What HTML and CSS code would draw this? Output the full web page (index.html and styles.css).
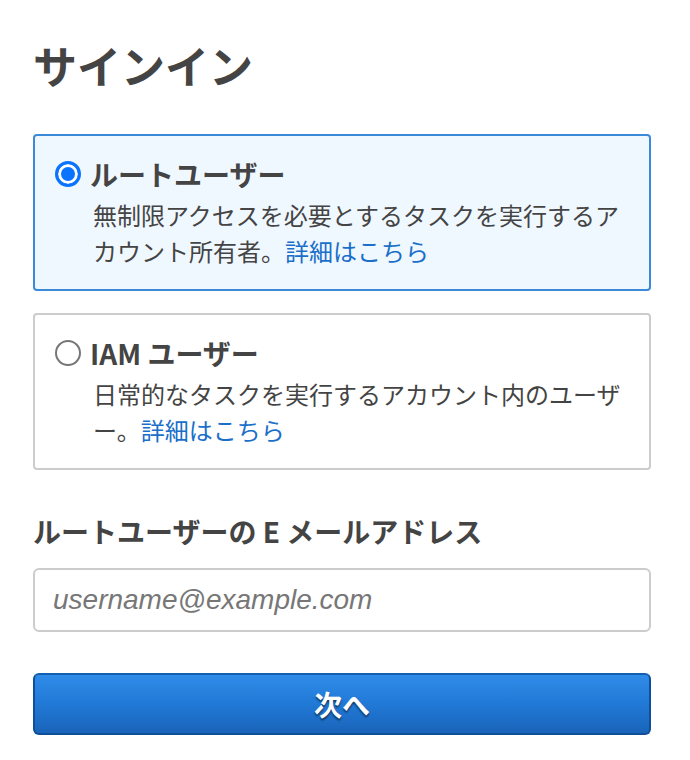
FILE: index.html
```html
<!DOCTYPE html>
<html lang="ja">
<head>
<meta charset="utf-8">
<title>サインイン</title>
<link rel="stylesheet" href="styles.css">
</head>
<body>
<main class="page">
  <h1 class="title">サインイン</h1>
  <div class="option selected">
    <div class="option-head">
      <span class="radio on"></span>
      <span class="option-title">ルートユーザー</span>
    </div>
    <p class="option-desc"><span>無制限アクセスを必要とするタスクを実行するア</span><br><span>カウント所有者。</span><a class="link" href="#">詳細はこちら</a></p>
  </div>
  <div class="option">
    <div class="option-head">
      <span class="radio"></span>
      <span class="option-title">IAM ユーザー</span>
    </div>
    <p class="option-desc"><span>日常的なタスクを実行するアカウント内のユーザ</span><br><span>ー。</span><a class="link" href="#">詳細はこちら</a></p>
  </div>
  <label class="field-label" for="email">ルートユーザーの E メールアドレス</label>
  <input class="field-input" id="email" type="text" placeholder="username@example.com">
  <button class="btn-next" type="button">次へ</button>
</main>
</body>
</html>
```
FILE: styles.css
```css
html, body {
  margin: 0;
  padding: 0;
  background: #ffffff;
}
body {
  font-family: "Noto Sans CJK JP", "Noto Sans", sans-serif;
  color: #444444;
}
.page {
  width: 618px;
  padding: 40px 0 0 33px;
  display: flex;
  flex-direction: column;
}
.title {
  margin: 0 0 44px;
  font-size: 44px;
  line-height: 50px;
  font-weight: 700;
  color: #444444;
}
.option {
  border: 2px solid #cccccc;
  border-radius: 4px;
  padding: 18px 20px 20px 20px;
  background: #ffffff;
  margin-bottom: 22px;
}
.option.selected {
  border-color: #3a8ad9;
  background: #f0f8ff;
}
.option-head {
  display: flex;
  align-items: center;
  gap: 9px;
  height: 40px;
}
.radio {
  box-sizing: border-box;
  width: 26px;
  height: 26px;
  border-radius: 50%;
  border: 2px solid #767676;
  background: #ffffff;
  flex: none;
}
.radio.on {
  border: 3px solid #0a74ff;
  background: #0a74ff;
  box-shadow: inset 0 0 0 3px #ffffff;
}
.option-title {
  font-size: 28px;
  line-height: 40px;
  font-weight: 700;
  color: #444444;
}
.option-desc {
  margin: 3px 0 0 38px;
  font-size: 24px;
  line-height: 36px;
  color: #444444;
  white-space: nowrap;
}
.link {
  color: #1a6fc9;
  text-decoration: none;
}
.field-label {
  margin-top: 19px;
  font-size: 28px;
  line-height: 40px;
  font-weight: 700;
  color: #444444;
}
.field-input {
  box-sizing: border-box;
  margin-top: 17px;
  height: 64px;
  width: 618px;
  border: 2px solid #cccccc;
  border-radius: 6px;
  padding: 0 18px;
  font-family: "Liberation Sans", Arial, sans-serif;
  font-size: 28px;
  color: #444444;
  background: #ffffff;
  outline: none;
}
.field-input::placeholder {
  font-style: italic;
  color: #777777;
}
.btn-next {
  box-sizing: border-box;
  margin-top: 41px;
  height: 62px;
  width: 618px;
  border: 2px solid #0e4f99;
  border-top-color: #1460b0;
  border-radius: 6px;
  background: linear-gradient(to bottom, #2f8ce8 0%, #2179d6 50%, #1a64ba 100%);
  color: #ffffff;
  font-family: "Noto Sans CJK JP", sans-serif;
  font-size: 28px;
  font-weight: 700;
  text-shadow: 0 2px 2px rgba(0, 0, 0, 0.55);
  cursor: pointer;
}
```
